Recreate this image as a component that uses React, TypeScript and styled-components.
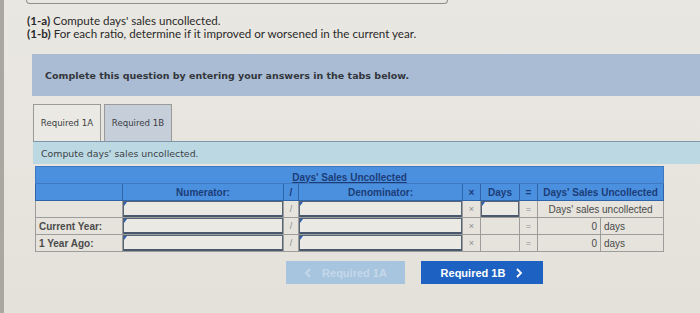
import React from 'react';
import styled, { createGlobalStyle } from 'styled-components';

const GlobalStyle = createGlobalStyle`
  html, body {
    margin: 0;
    padding: 0;
    background: #e7e5de;
  }
  body {
    width: 700px;
    height: 313px;
    overflow: hidden;
    font-family: 'Liberation Sans', Arial, sans-serif;
  }
`;

const Page = styled.div`
  position: relative;
  height: 313px;
  border-left: 4px solid #a9a79f;
  box-sizing: border-box;
  background: linear-gradient(180deg, #e9e7e1 0%, #e6e4dd 60%, #e3e1da 100%);
`;

const TopFrame = styled.div`
  margin: 0 0 0 22px;
  width: 420px;
  height: 3px;
  border: 1px solid #8f8e89;
  border-top: none;
  border-radius: 0 0 4px 4px;
`;

const Instructions = styled.div`
  padding: 10px 0 0 23px;
  font-family: Lato, 'Open Sans', sans-serif;
  font-size: 11.6px;
  line-height: 13px;
  color: #2a2a2a;
`;

const Part = styled.b`
  font-weight: 700;
`;

const Banner = styled.div`
  margin: 14px 0 0 28px;
  height: 42px;
  display: flex;
  align-items: center;
  padding-left: 13px;
  background: #a9bcd3;
  font-family: 'DejaVu Sans', Verdana, sans-serif;
  font-size: 9.5px;
  font-weight: 700;
  color: #33363c;
`;

const Body = styled.div`
  padding-left: 29px;
`;

const Tabs = styled.div`
  display: flex;
  gap: 3px;
  margin-top: 8px;
`;

const Tab = styled.div<{ active?: boolean }>`
  width: 68px;
  height: 37px;
  box-sizing: border-box;
  display: flex;
  align-items: center;
  justify-content: center;
  border: 1px solid #9a9a98;
  border-bottom: none;
  background: ${p => (p.active ? '#ebe9e3' : '#c6ceda')};
  font-family: 'DejaVu Sans', Verdana, sans-serif;
  font-size: 8.6px;
  color: #3a3d44;
`;

const Strip = styled.div`
  height: 22px;
  display: flex;
  align-items: center;
  padding-left: 8px;
  background: #bcd9e3;
  border-top: 1px solid #7f96a8;
  font-family: 'DejaVu Sans', Verdana, sans-serif;
  font-size: 9.4px;
  color: #3b3f46;
`;

const Table = styled.table`
  margin: 2px 0 0 2px;
  border-collapse: collapse;
  table-layout: fixed;
  width: 628px;
  font-size: 10px;
`;

const TitleCell = styled.th`
  height: 16px;
  padding: 0;
  background: #4b8fdf;
  border: 1px solid #3f79c2;
  font-weight: 700;
  color: #1c3d78;
  text-decoration: underline;
  text-align: center;
  vertical-align: bottom;
`;

const HeadCell = styled.th`
  height: 16px;
  padding: 0;
  background: #4b8fdf;
  border: 1px solid #2f64a8;
  font-weight: 700;
  color: #1c3d78;
  text-align: center;
`;

const Cell = styled.td<{ align?: 'left' | 'right' | 'center' }>`
  height: 16px;
  padding: 0 3px;
  border: 1px solid #9c9c9a;
  color: #4a4a4a;
  text-align: ${p => p.align || 'center'};
  white-space: nowrap;
`;

const Label = styled(Cell)`
  font-weight: 700;
  color: #4b4b4b;
`;

const Sign = styled(Cell)`
  color: #8a8c92;
  font-size: 9px;
`;

const InputCell = styled.td`
  height: 16px;
  padding: 0;
  border: 1px solid #9c9c9a;
`;

const Entry = styled.div`
  position: relative;
  height: 16px;
  box-sizing: border-box;
  border: 1px solid #56647a;
  border-bottom: 2px solid #4a586e;
  background: #ebe9e3;

  &::before {
    content: '';
    position: absolute;
    left: 0;
    top: 0;
    border-top: 4px solid #2f5fb0;
    border-right: 3px solid transparent;
  }
`;

const Buttons = styled.div`
  display: flex;
  gap: 16px;
  margin: 9px 0 0 253px;
`;

const NavButton = styled.div<{ disabled?: boolean }>`
  width: ${p => (p.disabled ? '119px' : '122px')};
  height: 23px;
  display: flex;
  align-items: center;
  justify-content: center;
  gap: 10px;
  background: ${p => (p.disabled ? '#a8c5df' : '#1d62c2')};
  color: ${p => (p.disabled ? '#c4d8ea' : '#ffffff')};
  font-size: 11px;
  font-weight: 700;
`;

const Chevron = ({ dir }: { dir: 'left' | 'right' }) => (
  <svg width="8" height="10" viewBox="0 0 8 10">
    <path
      d={dir === 'right' ? 'M2 1l4 4-4 4' : 'M6 1L2 5l4 4'}
      fill="none"
      stroke="currentColor"
      strokeWidth="1.8"
    />
  </svg>
);

const rows = [
  { label: '', first: true },
  { label: 'Current Year:', first: false },
  { label: '1 Year Ago:', first: false },
];

export default function App() {
  return (
    <>
      <GlobalStyle />
      <Page>
        <TopFrame />
        <Instructions>
          <div>
            <Part>(1-a)</Part> Compute days' sales uncollected.
          </div>
          <div>
            <Part>(1-b)</Part> For each ratio, determine if it improved or worsened in the current year.
          </div>
        </Instructions>
        <Banner>Complete this question by entering your answers in the tabs below.</Banner>
        <Body>
          <Tabs>
            <Tab active>Required 1A</Tab>
            <Tab>Required 1B</Tab>
          </Tabs>
          <Strip>Compute days' sales uncollected.</Strip>
          <Table>
            <colgroup>
              <col style={{ width: 87 }} />
              <col style={{ width: 161 }} />
              <col style={{ width: 15 }} />
              <col style={{ width: 164 }} />
              <col style={{ width: 18 }} />
              <col style={{ width: 39 }} />
              <col style={{ width: 18 }} />
              <col style={{ width: 63 }} />
              <col style={{ width: 63 }} />
            </colgroup>
            <thead>
              <tr>
                <TitleCell colSpan={9}>Days' Sales Uncollected</TitleCell>
              </tr>
              <tr>
                <HeadCell />
                <HeadCell>Numerator:</HeadCell>
                <HeadCell>/</HeadCell>
                <HeadCell>Denominator:</HeadCell>
                <HeadCell>×</HeadCell>
                <HeadCell>Days</HeadCell>
                <HeadCell>=</HeadCell>
                <HeadCell colSpan={2}>Days' Sales Uncollected</HeadCell>
              </tr>
            </thead>
            <tbody>
              {rows.map(r => (
                <tr key={r.label || 'head'}>
                  <Label align="left">{r.label}</Label>
                  <InputCell>
                    <Entry />
                  </InputCell>
                  <Sign>/</Sign>
                  <InputCell>
                    <Entry />
                  </InputCell>
                  <Sign>×</Sign>
                  {r.first ? (
                    <InputCell>
                      <Entry />
                    </InputCell>
                  ) : (
                    <Cell />
                  )}
                  <Sign>=</Sign>
                  {r.first ? (
                    <Cell colSpan={2}>Days' sales uncollected</Cell>
                  ) : (
                    <>
                      <Cell align="right">0</Cell>
                      <Cell align="left">days</Cell>
                    </>
                  )}
                </tr>
              ))}
            </tbody>
          </Table>
          <Buttons>
            <NavButton disabled>
              <Chevron dir="left" />
              Required 1A
            </NavButton>
            <NavButton>
              Required 1B
              <Chevron dir="right" />
            </NavButton>
          </Buttons>
        </Body>
      </Page>
    </>
  );
}
